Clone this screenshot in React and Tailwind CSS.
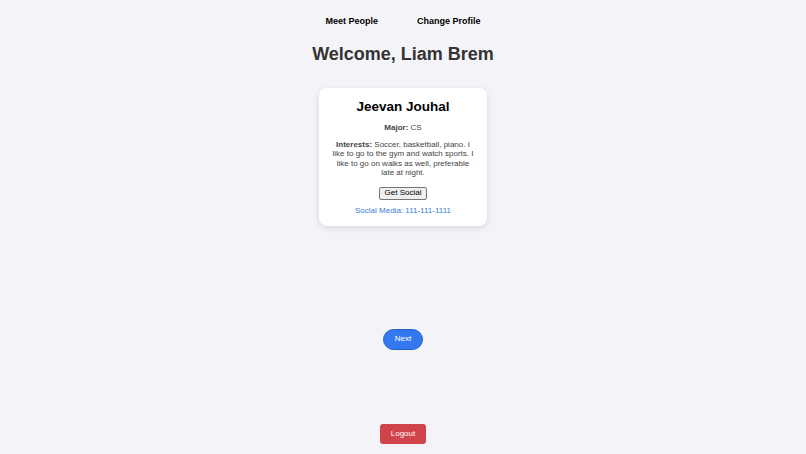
export default function App() {
  return (
    <div
      className="min-h-[454px] bg-[#f4f4f8] flex flex-col items-center text-[#333]"
      style={{ fontFamily: '"Liberation Sans", Arial, sans-serif' }}
    >
      <nav className="flex gap-[39px] pt-[16px] text-[9px] font-bold text-black">
        <a className="leading-[11px]">Meet People</a>
        <a className="leading-[11px]">Change Profile</a>
      </nav>
      <h1 className="mt-[16px] text-[18px] leading-[22px] font-bold text-[#333]">Welcome, Liam Brem</h1>

      <div className="mt-[23px] w-[168px] bg-white rounded-[8px] shadow-[0_2px_6px_rgba(0,0,0,0.12)] px-[11px] pt-[11px] pb-[10px] flex flex-col items-center text-center">
        <h2 className="text-[13.5px] leading-[16px] font-bold text-black">Jeevan Jouhal</h2>
        <p className="mt-[8px] text-[8px] leading-[10px] text-[#444]">
          <span className="font-bold">Major:</span> CS
        </p>
        <p className="mt-[7px] text-[8px] leading-[9.4px] text-[#444]">
          <span className="font-bold">Interests:</span> Soccer, basketball, piano. I like to go to the gym and watch sports. I like to go on walks as well, preferable late at night.
        </p>
        <button className="mt-[9px] px-[5px] h-[13px] text-[8px] leading-[10px] text-black bg-[#efefef] border border-[#767676] rounded-[2px]">
          Get Social
        </button>
        <p className="mt-[6px] text-[8px] leading-[10px] text-[#3b7be0]">Social Media: 111-111-1111</p>
      </div>

      <button className="mt-[103px] w-[40px] h-[21px] rounded-full bg-[#3478ef] border border-[#2560c8] text-white text-[8px]">
        Next
      </button>

      <button className="mt-[74px] w-[46px] h-[20px] rounded-[3px] bg-[#d1434b] text-white text-[8px]">
        Logout
      </button>
    </div>
  );
}
